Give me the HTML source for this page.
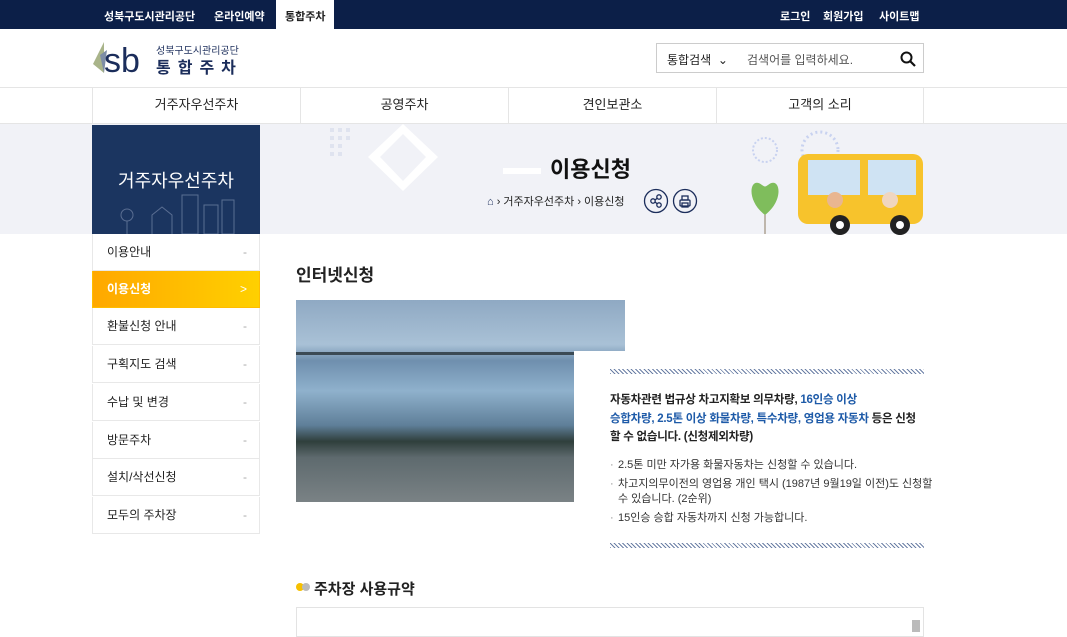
<!DOCTYPE html>
<html><head><meta charset="utf-8"><style>
*{margin:0;padding:0;box-sizing:border-box}
body{width:1067px;height:632px;overflow:hidden;background:#fff;font-family:"Liberation Sans","Noto Sans CJK KR",sans-serif;color:#222;position:relative}
.abs{position:absolute}
.top{left:0;top:0;width:1067px;height:29px;background:#0c1f48}
.top span{position:absolute;top:8px;font-size:11px;color:#fff;font-weight:bold}
.nav{top:87px;left:0;width:1067px;height:37px;border-top:1px solid #e5e5e5;border-bottom:1px solid #e5e5e5}
.nav div{position:absolute;top:0;height:36px;width:208px;text-align:center;line-height:34px;font-size:13px;border-left:1px solid #e5e5e5}
.side div{position:absolute;left:92px;width:168px;height:37px;border:1px solid #e8e8e8;border-top:none;font-size:12px;line-height:36px;padding-left:14px;color:#222}
.side div b{position:absolute;right:12px;font-weight:normal;color:#aaa}
ul{list-style:none}
li{position:relative;padding-left:8px;font-size:11px;color:#333;line-height:15px;margin-bottom:4px;white-space:nowrap}
li:before{content:"·";position:absolute;left:0;color:#888}
.hatch{height:5px;background:repeating-linear-gradient(45deg,#6b7fa5 0 1px,#fff 1px 3px)}
</style></head><body>
<div class="abs top">
<span style="left:104px">성북구도시관리공단</span>
<span style="left:214px">온라인예약</span>
<div class="abs" style="left:276px;top:0;width:58px;height:29px;background:#fff"></div>
<span style="left:285px;color:#222">통합주차</span>
<span style="left:780px">로그인</span>
<span style="left:823px">회원가입</span>
<span style="left:879px">사이트맵</span>
</div>
<svg class="abs" style="left:92px;top:40px" width="66" height="36"><path d="M12 2 L1 24 L12 33 Z" fill="#a9b48a"/><path d="M8 15 L12 33 L15 10Z" fill="#7d8da6"/><text x="12" y="32" font-size="34" fill="#1b2d5b" font-family="Liberation Sans">sb</text></svg>
<div class="abs" style="left:156px;top:42px;font-size:10px;color:#1b2d5b">성북구도시관리공단</div>
<div class="abs" style="left:156px;top:54px;font-size:16px;font-weight:bold;color:#1b2d5b;letter-spacing:7px">통합주차</div>
<div class="abs" style="left:656px;top:43px;width:268px;height:30px;border:1px solid #ccc"></div>
<div class="abs" style="left:667px;top:51px;font-size:12px">통합검색 &nbsp;⌄</div>
<div class="abs" style="left:747px;top:51px;font-size:12px;color:#555">검색어를 입력하세요.</div>
<svg class="abs" style="left:900px;top:51px" width="16" height="16"><circle cx="6.5" cy="6.5" r="5" stroke="#111" stroke-width="2" fill="none"/><path d="M10 10 L15 15" stroke="#111" stroke-width="2.2"/></svg>
<div class="abs nav">
<div style="left:92px">거주자우선주차</div><div style="left:300px">공영주차</div><div style="left:508px">견인보관소</div><div style="left:716px;border-right:1px solid #e5e5e5">고객의 소리</div>
</div>
<div class="abs" style="left:0;top:124px;width:1067px;height:110px;background:#f1f2f7"></div>
<div class="abs" style="left:92px;top:125px;width:168px;height:109px;background:#1b3560;color:#fff;font-size:18px;text-align:center;padding-top:42px">거주자우선주차</div>
<svg class="abs" style="left:92px;top:185px" width="168" height="49"><g stroke="#5a6e92" fill="none" stroke-width="1"><rect x="90" y="10" width="16" height="39"/><rect x="112" y="20" width="14" height="29"/><rect x="130" y="15" width="12" height="34"/><path d="M60 49V30l10-8 10 8v19"/><circle cx="35" cy="30" r="6"/><path d="M35 36v13"/></g></svg>
<svg class="abs" style="left:328px;top:124px" width="115" height="70"><g fill="#dfe3ef"><rect x="2" y="4" width="4" height="4"/><rect x="10" y="4" width="4" height="4"/><rect x="18" y="4" width="4" height="4"/><rect x="2" y="12" width="4" height="4"/><rect x="10" y="12" width="4" height="4"/><rect x="18" y="12" width="4" height="4"/><rect x="2" y="20" width="4" height="4"/><rect x="10" y="20" width="4" height="4"/><rect x="2" y="28" width="4" height="4"/><rect x="10" y="28" width="4" height="4"/></g><path d="M75 0 L110 33 L75 67 L40 33Z M75 10 L52 33 L75 57 L98 33Z" fill="#fff" fill-rule="evenodd"/></svg>
<div class="abs" style="left:503px;top:168px;width:38px;height:6px;background:#fff"></div>
<div class="abs" style="left:550px;top:152px;font-size:22px;font-weight:bold;color:#111">이용신청</div>
<div class="abs" style="left:487px;top:193px;font-size:11px;color:#222"><span style="color:#1b2d5b">⌂</span> › 거주자우선주차 › 이용신청</div>
<svg class="abs" style="left:643px;top:188px" width="56" height="26"><g fill="none" stroke="#1b2d5b" stroke-width="1.3"><circle cx="13" cy="13" r="11.5"/><circle cx="42" cy="13" r="11.5"/><circle cx="10" cy="13" r="2.2"/><circle cx="16" cy="9" r="2.2"/><circle cx="16" cy="17" r="2.2"/><path d="M12 12l2.5-2M12 14l2.5 2"/><rect x="37" y="12" width="10" height="6" rx="1"/><rect x="39" y="8" width="6" height="4"/><rect x="39" y="15" width="6" height="4"/></g></svg>
<svg class="abs" style="left:750px;top:130px" width="185" height="106"><circle cx="15" cy="20" r="12" fill="none" stroke="#c8d2f0" stroke-width="2" stroke-dasharray="2 2"/><circle cx="70" cy="20" r="18" fill="none" stroke="#c8d2f0" stroke-width="3" stroke-dasharray="2 3"/><path d="M15 104V60" stroke="#8a7a60"/><path d="M15 85 C-5 70 0 45 12 55 C15 57 15 57 18 55 C30 45 35 70 15 85Z" fill="#7fbd5c"/><rect x="48" y="24" width="125" height="70" rx="10" fill="#f7c32c"/><rect x="58" y="30" width="52" height="35" fill="#cfe3f3"/><rect x="118" y="30" width="48" height="35" fill="#cfe3f3"/><circle cx="85" cy="70" r="8" fill="#e9b690"/><circle cx="140" cy="70" r="8" fill="#f0d6c0"/><circle cx="90" cy="95" r="10" fill="#222"/><circle cx="150" cy="95" r="10" fill="#222"/><circle cx="90" cy="95" r="4" fill="#fff"/><circle cx="150" cy="95" r="4" fill="#fff"/></svg>
<div class="side">
<div style="top:234px">이용안내<b>-</b></div>
<div style="top:271px;background:linear-gradient(90deg,#ffa800,#ffd000);color:#fff;font-weight:bold;border-color:#ffbd00">이용신청<b style="color:#fff">&gt;</b></div>
<div style="top:308px">환불신청 안내<b>-</b></div>
<div style="top:346px">구획지도 검색<b>-</b></div>
<div style="top:384px">수납 및 변경<b>-</b></div>
<div style="top:422px">방문주차<b>-</b></div>
<div style="top:459px">설치/삭선신청<b>-</b></div>
<div style="top:497px">모두의 주차장<b>-</b></div>
</div>
<div class="abs" style="left:296px;top:261px;font-size:17px;font-weight:bold">인터넷신청</div>
<div class="abs" style="left:296px;top:300px;width:329px;height:202px;background:linear-gradient(180deg,#8fa9c3 0%,#a9c1d6 22%,#6f8fae 30%,#8fb1cc 45%,#5f7f99 62%,#2f3f3c 70%,#5e6a6e 78%,#7a8285 100%)"></div>
<div class="abs" style="left:296px;top:352px;width:278px;height:3px;background:#3b4a55"></div>
<div class="abs" style="left:574px;top:351px;width:366px;height:215px;background:#fff"></div>
<div class="abs hatch" style="left:610px;top:369px;width:314px"></div>
<div class="abs" style="left:610px;top:391px;width:330px;font-size:11.5px;letter-spacing:-0.25px;font-weight:bold;line-height:18.5px;color:#222;white-space:nowrap">자동차관련 법규상 차고지확보 의무차량, <span style="color:#1d5aa8">16인승 이상</span><br><span style="color:#1d5aa8">승합차량, 2.5톤 이상 화물차량, 특수차량, 영업용 자동차</span> 등은 신청<br>할 수 없습니다. (신청제외차량)</div>
<ul class="abs" style="left:610px;top:458px;width:316px">
<li>2.5톤 미만 자가용 화물자동차는 신청할 수 있습니다.</li>
<li>차고지의무이전의 영업용 개인 택시 (1987년 9월19일 이전)도 신청할<br>수 있습니다. (2순위)</li>
<li>15인승 승합 자동차까지 신청 가능합니다.</li>
</ul>
<div class="abs hatch" style="left:610px;top:543px;width:314px"></div>
<div class="abs" style="left:296px;top:583px;width:8px;height:8px;border-radius:50%;background:#f6c000"></div>
<div class="abs" style="left:302px;top:583px;width:8px;height:8px;border-radius:50%;background:#bbb"></div>
<div class="abs" style="left:314px;top:578px;font-size:15px;font-weight:bold">주차장 사용규약</div>
<div class="abs" style="left:296px;top:607px;width:628px;height:30px;border:1px solid #e3e3e3"></div>
<div class="abs" style="left:912px;top:620px;width:8px;height:12px;background:#bbb"></div>
</body></html>
